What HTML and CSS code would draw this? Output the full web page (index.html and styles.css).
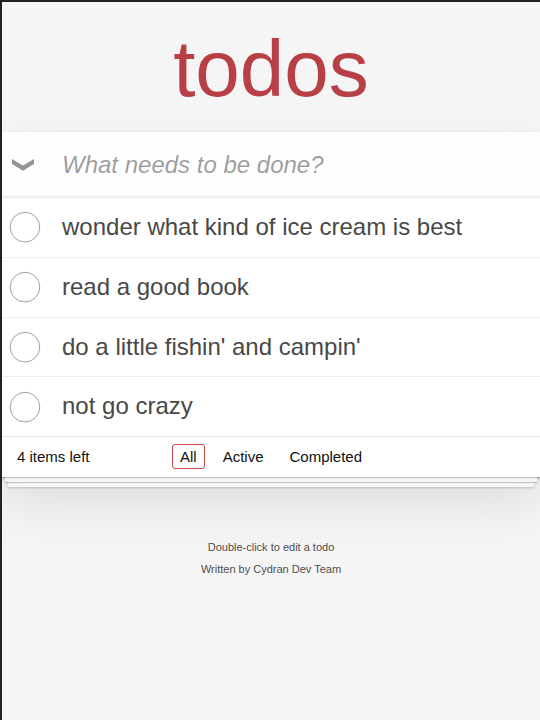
FILE: index.html
```html
<!DOCTYPE html>
<html lang="en">
<head>
<meta charset="utf-8">
<title>Cydran • TodoMVC</title>
<link rel="stylesheet" href="styles.css">
</head>
<body>
<section class="todoapp">
  <header class="header">
    <h1 class="title">todos</h1>
  </header>
  <div class="card">
    <div class="entry">
      <label class="toggle-all" for="new-todo">
        <svg class="chevron" width="22" height="12" viewBox="0 0 22 12" aria-hidden="true">
          <polygon points="0,0 11,6.4 22,0 22,5 11,11.8 0,5" fill="#949494"/>
        </svg>
      </label>
      <input id="new-todo" class="new-todo" placeholder="What needs to be done?">
    </div>
    <ul class="todo-list">
      <li class="todo">
        <span class="toggle"><svg width="40" height="40" viewBox="-10 -18 100 135"><circle cx="50" cy="50" r="50" fill="none" stroke="#949494" stroke-width="3"/></svg></span>
        <label class="todo-label">wonder what kind of ice cream is best</label>
      </li>
      <li class="todo">
        <span class="toggle"><svg width="40" height="40" viewBox="-10 -18 100 135"><circle cx="50" cy="50" r="50" fill="none" stroke="#949494" stroke-width="3"/></svg></span>
        <label class="todo-label">read a good book</label>
      </li>
      <li class="todo">
        <span class="toggle"><svg width="40" height="40" viewBox="-10 -18 100 135"><circle cx="50" cy="50" r="50" fill="none" stroke="#949494" stroke-width="3"/></svg></span>
        <label class="todo-label">do a little fishin' and campin'</label>
      </li>
      <li class="todo">
        <span class="toggle"><svg width="40" height="40" viewBox="-10 -18 100 135"><circle cx="50" cy="50" r="50" fill="none" stroke="#949494" stroke-width="3"/></svg></span>
        <label class="todo-label">not go crazy</label>
      </li>
    </ul>
    <footer class="footer">
      <span class="todo-count">4 items left</span>
      <ul class="filters">
        <li><a class="filter selected" href="#/">All</a></li>
        <li><a class="filter" href="#/active">Active</a></li>
        <li><a class="filter" href="#/completed">Completed</a></li>
      </ul>
      <span class="spacer"></span>
    </footer>
  </div>
</section>
<footer class="info">
  <p>Double-click to edit a todo</p>
  <p>Written by Cydran Dev Team</p>
</footer>
</body>
</html>
```

FILE: styles.css
```css
* {
  box-sizing: border-box;
}

html {
  margin: 0;
  padding: 0;
}

body {
  margin: 0;
  padding: 0;
  min-height: 100vh;
  font: 14px "Liberation Sans", Arial, sans-serif;
  line-height: 1.4em;
  background: #f5f5f5;
  color: #111111;
  border-top: 2px solid #222222;
  border-left: 2px solid #222222;
}

.title {
  margin: 0 0 23px;
  padding-top: 27px;
  font-size: 80px;
  line-height: 80px;
  font-weight: 200;
  text-align: center;
  color: #b83f45;
}

.card {
  background: #ffffff;
  box-shadow: 0 2px 4px 0 rgba(0, 0, 0, 0.2),
              0 25px 50px 0 rgba(0, 0, 0, 0.1);
}

.entry {
  display: flex;
  align-items: center;
  height: 65px;
  background: rgba(0, 0, 0, 0.003);
  box-shadow: inset 0 -2px 1px rgba(0, 0, 0, 0.03);
}

.toggle-all {
  flex: none;
  width: 60px;
  display: flex;
  padding-left: 10px;
}

.chevron {
  display: block;
  margin-top: 1px;
}

.new-todo {
  flex: 1;
  min-width: 0;
  height: 65px;
  margin: 0;
  padding: 16px 16px 16px 0;
  border: none;
  outline: none;
  background: transparent;
  font-family: inherit;
  font-size: 24px;
  line-height: 1.4em;
  color: #111111;
}

.new-todo::placeholder {
  font-style: italic;
  font-weight: 400;
  color: rgba(0, 0, 0, 0.4);
}

.todo-list {
  margin: 0;
  padding: 0;
  list-style: none;
  border-top: 1px solid #e6e6e6;
}

.todo {
  display: flex;
  align-items: center;
  font-size: 24px;
  border-bottom: 1px solid #ededed;
}

.todo:last-child {
  border-bottom: none;
}

.toggle {
  flex: none;
  width: 60px;
  display: flex;
}

.toggle svg {
  display: block;
}

.todo-label {
  flex: 1;
  padding: 15px 15px 15px 0;
  line-height: 1.2;
  color: #484848;
  word-break: break-all;
}

.footer {
  display: grid;
  grid-template-columns: 1fr auto 1fr;
  align-items: center;
  height: 41px;
  padding: 7px 15px 8px;
  font-size: 15px;
  border-top: 1px solid #e6e6e6;
  box-shadow: 0 1px 1px rgba(0, 0, 0, 0.2),
              0 8px 0 -3px #f6f6f6,
              0 9px 1px -3px rgba(0, 0, 0, 0.2),
              0 16px 0 -6px #f6f6f6,
              0 17px 2px -6px rgba(0, 0, 0, 0.2);
}

.todo-count {
  justify-self: start;
  line-height: 20px;
}

.filters {
  display: flex;
  gap: 4px;
  margin: 0;
  padding: 0;
  list-style: none;
}

.filter {
  display: block;
  margin: 0 3px;
  padding: 3px 7px;
  line-height: 17px;
  color: inherit;
  text-decoration: none;
  border: 1px solid transparent;
  border-radius: 3px;
}

.filter.selected {
  border-color: #ce4646;
}

.info {
  display: flex;
  flex-direction: column;
  gap: 11px;
  margin-top: 65px;
  color: #4d4d4d;
  font-size: 11px;
  text-align: center;
  text-shadow: 0 1px 0 rgba(255, 255, 255, 0.5);
}

.info p {
  margin: 0;
  line-height: 1;
}
```
